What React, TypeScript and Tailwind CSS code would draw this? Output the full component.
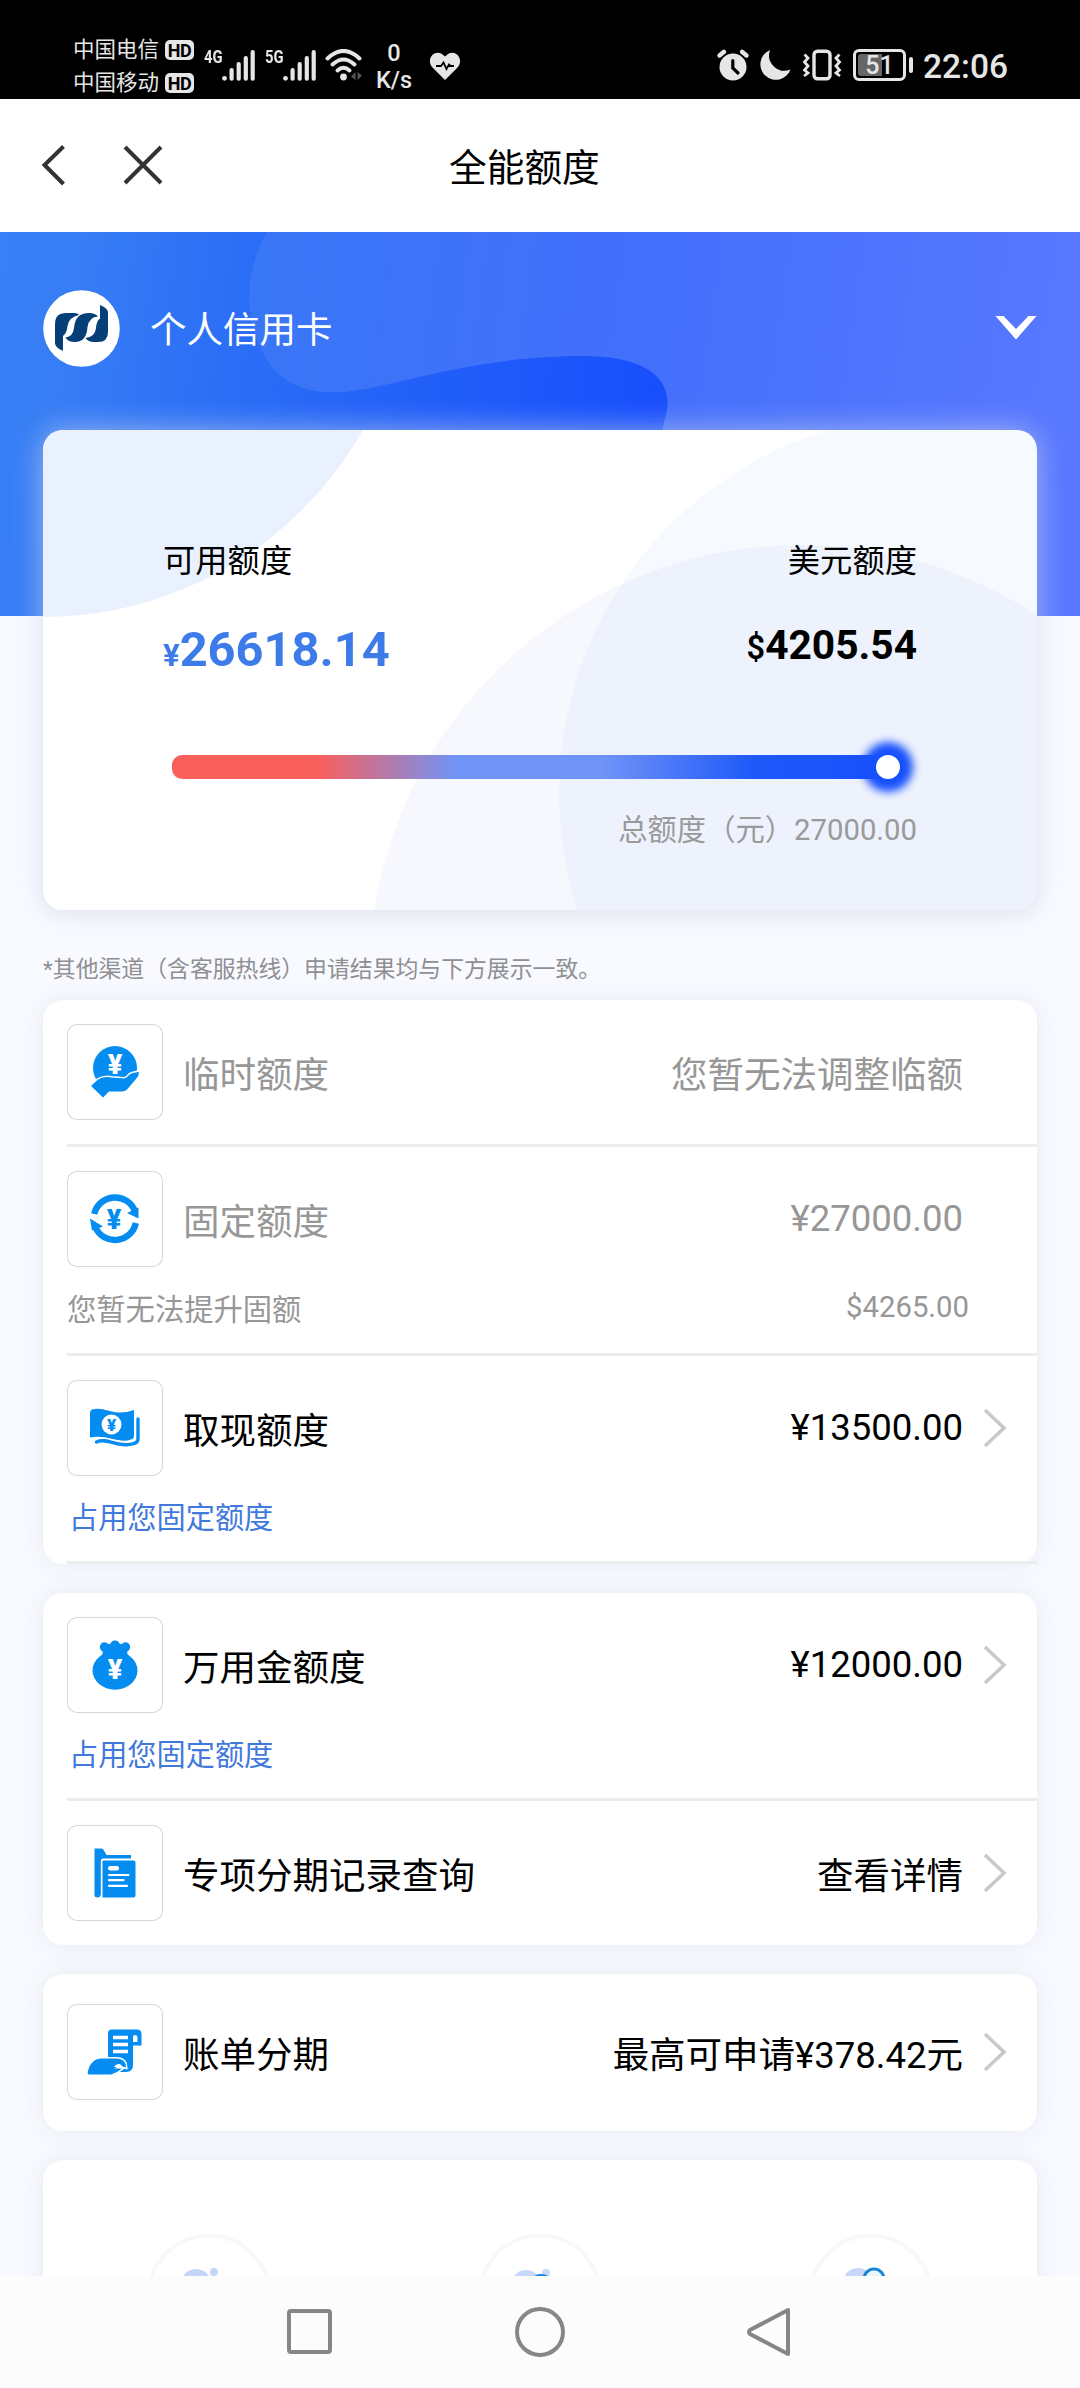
import React from "react";

const BLUE = "#048cf0";

function Yen({ x, y, size, fill }: { x: number; y: number; size: number; fill: string }) {
  return (
    <text x={x} y={y} fontSize={size} fill={fill} textAnchor="middle" fontFamily="Roboto, sans-serif" fontWeight="900">
      ¥
    </text>
  );
}

function IconBox({ children }: { children: React.ReactNode }) {
  return (
    <div className="h-24 w-24 shrink-0 rounded-[10px] shadow-[inset_0_0_0_1px_#d6d6d9]">
      <svg viewBox="0 0 96 96" className="block h-24 w-24">
        {children}
      </svg>
    </div>
  );
}

const HandCoin = () => (
  <IconBox>
    <circle cx="48" cy="44" r="22" fill={BLUE} />
    <path d="M24 62 L31 55.5 Q37 52 45 53.5 L57 54.5 Q60 54 62 51 Q64 48.5 72 48 Q72 52 69 55 L60 65.5 Q58 67.5 55 67.5 H42 L36 73.5 Z" fill={BLUE} stroke="#fff" strokeWidth="3" strokeLinejoin="round" paintOrder="stroke" />
    <Yen x={48} y={49.5} size={27} fill="#fff" />
  </IconBox>
);

const CycleCoin = () => (
  <IconBox>
    <path d="M27.2 43 A21.300 21.300 0 0 1 68 40.500" fill="none" stroke={BLUE} strokeWidth="6.4" />
    <path d="M71.500 36.500 V47.500 L60 42 Z" fill={BLUE} />
    <path d="M68.800 52 A21.300 21.300 0 0 1 28.500 56.500" fill="none" stroke={BLUE} strokeWidth="6.4" />
    <path d="M23 47.500 L36 55.500 L25 59.500 Z" fill={BLUE} />
    <Yen x={47} y={58} size={27} fill={BLUE} />
  </IconBox>
);

const Banknotes = () => (
  <IconBox>
    <path d="M23 33 Q23 29 28 29 C37 28 44 33 53 32.5 Q60 32.5 67 30 V56 Q67 58.5 64 59.5 C52 64 40 54 23 57.5 Z" fill={BLUE} />
    <path d="M71 39 V59 Q71 62.5 67 63.5 C52 68.5 40 57 29.5 62" fill="none" stroke={BLUE} strokeWidth="3.4" strokeLinecap="round" />
    <circle cx="44.5" cy="44.5" r="10" fill="#fff" />
    <Yen x={44.5} y={50.5} size={17} fill={BLUE} />
  </IconBox>
);

const MoneyBag = () => (
  <IconBox>
    <ellipse cx="48" cy="53.500" rx="22.5" ry="19.2" fill={BLUE} />
    <circle cx="37.500" cy="30" r="4.700" fill={BLUE} />
    <circle cx="48" cy="28.500" r="5" fill={BLUE} />
    <circle cx="58.500" cy="30" r="4.700" fill={BLUE} />
    <path d="M36 27 H60 L61 33 Q59 36 62 40 L34 40 Q37 36 35 33 Z" fill={BLUE} />
    <Yen x={48} y={62} size={27} fill="#fff" />
  </IconBox>
);

const Folder = () => (
  <IconBox>
    <path d="M27.5 23.5 H34 Q36 23.5 37 25.5 L39.5 30 H64 V33.5 H36 Q33.8 33.5 33.8 36 V70 Q33 72.5 30.5 72.5 Q27.5 72.5 27.5 70 Z" fill={BLUE} />
    <path d="M36 35.5 H66.5 Q68.5 35.5 68.5 37.5 V70 Q68.5 72.5 66 72.5 H35.5 V37 Z" fill={BLUE} />
    <rect x="41" y="41" width="11" height="4.6" rx="2.3" fill="#fff" />
    <path d="M42 50 H61.5 M42 55.2 H56.5 M42 60.8 H60" stroke="#fff" strokeWidth="2.2" strokeLinecap="round" />
  </IconBox>
);

const Bill = () => (
  <IconBox>
    <path d="M41 54 V29 Q41 25.5 45 25.5 H70 Q74.5 25.5 74.5 30 V41.5 H66 V61 Q66 68 59 68 H52 L41 60 Z" fill={BLUE} />
    <path d="M66 38 V33 Q66 31 68 31 Q70.5 31 70.5 34 V38 Z" fill="#fff" />
    <path d="M46 33.5 H61 M46 40.5 H61 M46 47.5 H61" stroke="#fff" strokeWidth="3.6" />
    <path d="M21 67 Q24 54.5 35 54.5 H50 Q59 55 59 63.5 Q52 61 47 64.5 H55 Q51 68 44 70.5 H22 Q20 70 21 67 Z" fill={BLUE} stroke="#fff" strokeWidth="3" paintOrder="stroke" />
    <path d="M47 63 Q49 59.5 53 60 L56 63 Z" fill="#fff" />
  </IconBox>
);

function Chevron() {
  return (
    <svg viewBox="0 0 26 42" className="block h-[42px] w-[26px]">
      <path d="M3 3 L22 21 L3 39" fill="none" stroke="#c8c9cc" strokeWidth="3.6" />
    </svg>
  );
}

function Row({ icon, label, value, muted = false, arrow = false, latin = false }: {
  icon: React.ReactNode; label: string; value: string; muted?: boolean; arrow?: boolean; latin?: boolean;
}) {
  return (
    <div className={`flex h-24 items-center ${muted ? "text-[#979797]" : "text-black"}`}>
      {icon}
      <span className="mt-[8px] ml-5 text-[36.5px] leading-[48px]">{label}</span>
      <span className={`ml-auto text-[36.5px] leading-[48px] ${latin ? "" : "mt-[8px]"}`}>{value}</span>
      <div className="flex w-[74px] pl-[19px]">{arrow && <Chevron />}</div>
    </div>
  );
}

const cardClass = "mx-[43px] shrink-0 rounded-[20px] bg-white pl-6 shadow-[0_0_24px_rgba(60,70,100,0.09)]";

function SignalBars() {
  return (
    <svg viewBox="0 0 33 31" className="h-[31px] w-[33px]" fill="#e6e6e6">
      <circle cx="2.5" cy="28.3" r="2.4" />
      <rect x="7.5" y="18" width="4.2" height="12.7" rx="2" />
      <rect x="14.6" y="12" width="4.2" height="18.7" rx="2" />
      <rect x="21.7" y="6" width="4.2" height="24.7" rx="2" />
      <rect x="28.6" y="0" width="4.2" height="30.7" rx="2" />
    </svg>
  );
}

function Carrier({ name }: { name: string }) {
  return (
    <div className="flex h-[33px] items-center gap-[6px]">
      <span className="text-[21.5px] leading-[33px]">{name}</span>
      <span className="mt-px flex h-5 w-[29px] items-center justify-center rounded-[5px] bg-[#e6e6e6] text-[18px] font-bold tracking-[-0.5px] text-black">HD</span>
    </div>
  );
}

function StatusBar() {
  return (
    <div className="flex h-[99px] shrink-0 items-start bg-black text-[#e6e6e6]">
      <div className="ml-[73px] w-[131px] pt-[33px]">
        <Carrier name="中国电信" />
        <Carrier name="中国移动" />
      </div>
      <div className="flex w-[61px] pt-[50px]">
        <span className="h-4 w-[18px] origin-left scale-x-[0.78] text-[19px] leading-[14px] font-bold">4G</span>
        <SignalBars />
      </div>
      <div className="flex w-[60px] pt-[50px]">
        <span className="h-4 w-[18px] origin-left scale-x-[0.78] text-[19px] leading-[14px] font-bold">5G</span>
        <SignalBars />
      </div>
      <svg viewBox="0 0 38 33" className="mt-[49px] h-[33px] w-[38px]">
        <g fill="none" stroke="#e6e6e6" strokeWidth="4" strokeLinecap="round">
          <path d="M2.5 9.5 Q18.5 -5.5 34.5 9.5" />
          <path d="M7.5 15.5 Q18.5 5.5 29.5 15.5" />
          <path d="M12.5 21.5 Q18.5 16 24.5 21.5" />
        </g>
        <circle cx="18.5" cy="28" r="3.4" fill="#e6e6e6" />
        <path d="M30.5 23 V31 L26 27.5 Z M32.5 23 V31 L37 26.5 Z" fill="#555" />
      </svg>
      <div className="ml-[3px] flex w-[56px] flex-col items-center pt-[40px] text-[23.5px] leading-[27px] font-medium">
        <span>0</span>
        <span>K/s</span>
      </div>
      <svg viewBox="0 0 32 29" className="mt-[52px] ml-[7px] h-[29px] w-[32px]">
        <path d="M16 28 L3 15 C-3 7 5 -3 13 2 L16 4.5 L19 2 C27 -3 35 7 29 15 Z" fill="#e6e6e6" />
        <path d="M7 14 H12 L14.5 10.5 L17.5 17 L20 12.5 L21.5 14 H25" fill="none" stroke="#000" strokeWidth="1.8" />
      </svg>
      <svg viewBox="0 0 34 34" className="mt-[48px] ml-auto h-[34px] w-[34px]">
        <circle cx="17" cy="19" r="13.5" fill="#e6e6e6" />
        <path d="M3.5 7.5 L8 3.8 M30.5 7.5 L26 3.8" stroke="#e6e6e6" strokeWidth="4.4" strokeLinecap="round" />
        <path d="M16.8 12.5 V20 L22 25" fill="none" stroke="#000" strokeWidth="3.2" strokeLinecap="round" />
      </svg>
      <svg viewBox="0 0 32 32" className="mt-[49px] ml-[9px] h-[32px] w-[32px]">
        <path d="M11 1 A15.5 15.5 0 1 0 31.5 20.5 A15.5 15.5 0 0 1 11 1 Z" fill="#e6e6e6" />
      </svg>
      <svg viewBox="0 0 40 32" className="mt-[49px] ml-[11px] h-[32px] w-[40px]">
        <g fill="none" stroke="#e6e6e6" strokeWidth="3.4">
          <rect x="12" y="2.2" width="16" height="27.6" rx="3.5" />
          <path d="M2.5 5.5 L6 9 L2.5 13 L6 17 L2.5 21 L6 24 L2 27" strokeWidth="2.8" />
          <path d="M37.5 5.5 L34 9 L37.5 13 L34 17 L37.5 21 L34 24 L38 27" strokeWidth="2.8" />
        </g>
      </svg>
      <div className="mt-[49px] ml-[11px] flex items-center gap-[3px]">
        <div className="flex h-8 w-[53px] items-center justify-center rounded-[6px] border-[3.5px] border-[#e6e6e6] p-[2px]">
          <div className="flex h-full w-full items-center justify-center rounded-[3px] bg-[linear-gradient(90deg,#666_56%,#000_56%)] text-[25px] leading-[21px] font-medium">51</div>
        </div>
        <div className="h-4 w-[4px] rounded-[2px] bg-[#e6e6e6]" />
      </div>
      <span className="mt-[46px] mr-[72px] ml-[10px] text-[33.5px] leading-[42px] font-medium">22:06</span>
    </div>
  );
}

function Hero() {
  return (
    <div className="relative h-[384px] shrink-0">
      <svg viewBox="0 0 1080 384" className="absolute inset-0 h-[384px] w-full" preserveAspectRatio="none">
        <defs>
          <linearGradient id="base" gradientUnits="userSpaceOnUse" x1="0" y1="0" x2="660" y2="100">
            <stop offset="0" stopColor="#3780f5" />
            <stop offset="0.12" stopColor="#377df5" />
            <stop offset="0.4" stopColor="#2a6cf6" />
            <stop offset="1" stopColor="#184ffc" />
          </linearGradient>
          <linearGradient id="blob" gradientUnits="userSpaceOnUse" x1="245" y1="0" x2="1080" y2="120">
            <stop offset="0" stopColor="#3877f6" />
            <stop offset="0.45" stopColor="#426ffb" />
            <stop offset="1" stopColor="#5878ff" />
          </linearGradient>
        </defs>
        <rect width="1080" height="384" fill="url(#base)" />
        <path d="M267 0 C244 42 242 88 268 130 C286 156 314 162 344 160 C400 154 470 124 585 124 C640 124 680 144 664 190 C654 250 640 320 640 384 H1080 V0 Z" fill="url(#blob)" />
      </svg>
      <div className="relative flex items-center pt-[58px] pr-[42px] pl-[43px]">
        <svg viewBox="0 0 77 77" className="h-[77px] w-[77px]">
          <circle cx="38.5" cy="38.5" r="38.3" fill="#fff" />
          <g fill="#063f78">
            <path d="M12 34 Q12 23 23 23 H31 Q35 23 36 25 Q26 27 24.500 36 Q24 43 20 46 V60.700 Q12 58 12 53 Z" />
            <path d="M46 23 Q52.500 23 55 26.500 Q46 27 44.500 37 Q43.500 52 32 52 Q25 52 22.500 47.500 Q30 46.500 31 38 Q32 23 46 23 Z" />
            <path d="M57 15 Q65 18 65 23 V42 Q65 52 55 52 H51 Q45 52 42.500 48 Q52 47 53 38 Q53.500 31 57 28.500 Z" />
          </g>
        </svg>
        <span className="mt-[5px] ml-[30px] text-[36.5px] leading-[48px] text-white">个人信用卡</span>
        <svg viewBox="0 0 44 26" className="-mt-[2px] ml-auto h-[26px] w-[44px]">
          <path d="M1.500 1 H9.500 L22 14 L34.500 1 H42.500 L22 24.500 Z" fill="#fff" />
        </svg>
      </div>
    </div>
  );
}

function BalanceCard() {
  return (
    <div className="relative z-10 mx-[43px] -mt-[186px] h-[480px] shrink-0 rounded-[20px] bg-white shadow-[0_0_30px_rgba(215,222,240,0.65),0_4px_16px_rgba(90,90,110,0.08)]">
      <svg viewBox="0 0 994 480" className="absolute inset-0 h-[480px] w-full rounded-[20px]">
        <circle cx="0" cy="-180" r="367" fill="#eaf1fe" />
        <circle cx="895" cy="363" r="379" fill="#5a8cf0" fillOpacity="0.053" />
        <circle cx="758" cy="547" r="432" fill="#5a84f0" fillOpacity="0.053" />
      </svg>
      <div className="relative px-[120px] pt-[109px]">
        <div className="flex justify-between text-[32.300px] leading-[44px] text-black">
          <span>可用额度</span>
          <span>美元额度</span>
        </div>
        <div className="mt-[35px] flex h-[64px] justify-between font-bold">
          <span className="text-[48.800px] leading-[64px] text-[#3d7be8]">
            <span className="text-[31px]">¥</span>26618.14
          </span>
          <span className="text-[40.700px] leading-[54px] text-black">
            <span className="text-[32.500px] font-semibold">$</span>4205.54
          </span>
        </div>
        <div className="relative mt-[73px] ml-[9px] h-6 w-[729px] rounded-[10px] bg-[linear-gradient(90deg,#f9605b_0%,#f9605b_20%,#7093f7_39%,#7093f7_59%,#1e58fa_80%,#1750fb_100%)]">
          <div className="absolute top-[-13px] left-[691px] h-[50px] w-[50px] rounded-full bg-[#1750fb] blur-[4px]" />
          <div className="absolute top-0 left-[704px] h-6 w-6 rounded-full bg-white" />
        </div>
        <div className="mt-[31px] text-right text-[29.300px] leading-[40px] text-[#9a9a9c]">总额度（元）27000.00</div>
      </div>
    </div>
  );
}

const Divider = () => <div className="h-[3px] bg-[#ebecec]" />;

function Shortcut({ children }: { children: React.ReactNode }) {
  return (
    <div className="flex flex-1 justify-center">
      <svg viewBox="0 0 126 126" className="h-[126px] w-[126px]">
        <circle cx="63" cy="63" r="60.500" fill="#fff" stroke="#f8f8f9" strokeWidth="4" />
        {children}
      </svg>
    </div>
  );
}

export default function App() {
  return (
    <div className="flex h-[2388px] w-[1080px] flex-col overflow-hidden bg-[#f8faff] font-[Roboto,'Noto_Sans_CJK_SC',sans-serif]">
      <StatusBar />
      <header className="flex h-[133px] shrink-0 items-center bg-white">
        <div className="-mt-[2px] flex w-[449px] items-center pl-[40px]">
          <svg viewBox="0 0 28 42" className="h-[42px] w-[28px]">
            <path d="M23.500 2.500 L4.500 21 L23.500 40" fill="none" stroke="#333" strokeWidth="4" />
          </svg>
          <svg viewBox="0 0 42 42" className="ml-[54px] h-[42px] w-[42px]">
            <path d="M3 3 L39 39 M39 3 L3 39" fill="none" stroke="#333" strokeWidth="4" />
          </svg>
        </div>
        <h1 className="mt-[4px] text-[37.700px] leading-[50px] text-black">全能额度</h1>
      </header>

      <main className="flex h-[2044px] shrink-0 flex-col overflow-hidden">
        <Hero />
        <BalanceCard />
        <p className="mt-[43px] ml-[43px] h-[47px] shrink-0 text-[22.850px] leading-[34px] text-[#8f8f92]">*其他渠道（含客服热线）申请结果均与下方展示一致。</p>

        <section className={cardClass}>
          <div className="py-6"><Row icon={<HandCoin />} label="临时额度" value="您暂无法调整临额" muted /></div>
          <Divider />
          <div className="h-[206px] pt-6">
            <Row icon={<CycleCoin />} label="固定额度" value="¥27000.00" muted latin />
            <div className="mt-[20px] flex justify-between pr-[68px] text-[29.300px] leading-[44px] text-[#979797]">
              <span className="mt-px">您暂无法提升固额</span>
              <span className="mt-[-2px]">$4265.00</span>
            </div>
          </div>
          <Divider />
          <div className="h-[205px] pt-6">
            <Row icon={<Banknotes />} label="取现额度" value="¥13500.00" arrow latin />
            <div className="mt-[20px] ml-[2px] text-[29.200px] leading-[44px] text-[#4279dc]">占用您固定额度</div>
          </div>
          <Divider />
        </section>

        <section className={`${cardClass} mt-[29px]`}>
          <div className="h-[205px] pt-6">
            <Row icon={<MoneyBag />} label="万用金额度" value="¥12000.00" arrow latin />
            <div className="mt-[20px] ml-[2px] text-[29.200px] leading-[44px] text-[#4279dc]">占用您固定额度</div>
          </div>
          <Divider />
          <div className="py-6"><Row icon={<Folder />} label="专项分期记录查询" value="查看详情" arrow /></div>
        </section>

        <section className={`${cardClass} mt-[29px]`}>
          <div className="pt-[30px] pb-[31px]"><Row icon={<Bill />} label="账单分期" value="最高可申请¥378.42元" arrow /></div>
        </section>

        <section className="mx-[43px] mt-[29px] flex h-[240px] shrink-0 rounded-[20px] bg-white pt-[73px] shadow-[0_0_24px_rgba(60,70,100,0.09)]">
          <Shortcut>
            <ellipse cx="50" cy="48" rx="14" ry="12" fill="#c3d5f8" />
            <circle cx="68" cy="39" r="4" fill="#c3d5f8" />
          </Shortcut>
          <Shortcut>
            <ellipse cx="49" cy="48" rx="13" ry="11" fill="#c8d6f8" />
            <circle cx="69" cy="40" r="4" fill="#c8dcf8" />
            <ellipse cx="64" cy="45" rx="8" ry="4" fill="#1a86d4" />
          </Shortcut>
          <Shortcut>
            <ellipse cx="50" cy="47" rx="14" ry="12" fill="#c8d6f8" />
            <circle cx="66" cy="46" r="10" fill="#e8f7ff" stroke="#1a86d4" strokeWidth="3" />
          </Shortcut>
        </section>
      </main>

      <nav className="relative z-20 flex h-[112px] shrink-0 items-center justify-center bg-[#fcfcfc]">
        <svg viewBox="0 0 510 56" className="h-[56px] w-[510px]" fill="none" stroke="#868686" strokeWidth="4">
          <rect x="4" y="7" width="41" height="41" rx="2" />
          <circle cx="255" cy="28" r="23" />
          <path d="M503 6 V50 L465 30 Q463 28 465 26 Z" strokeLinejoin="round" />
        </svg>
      </nav>
    </div>
  );
}
